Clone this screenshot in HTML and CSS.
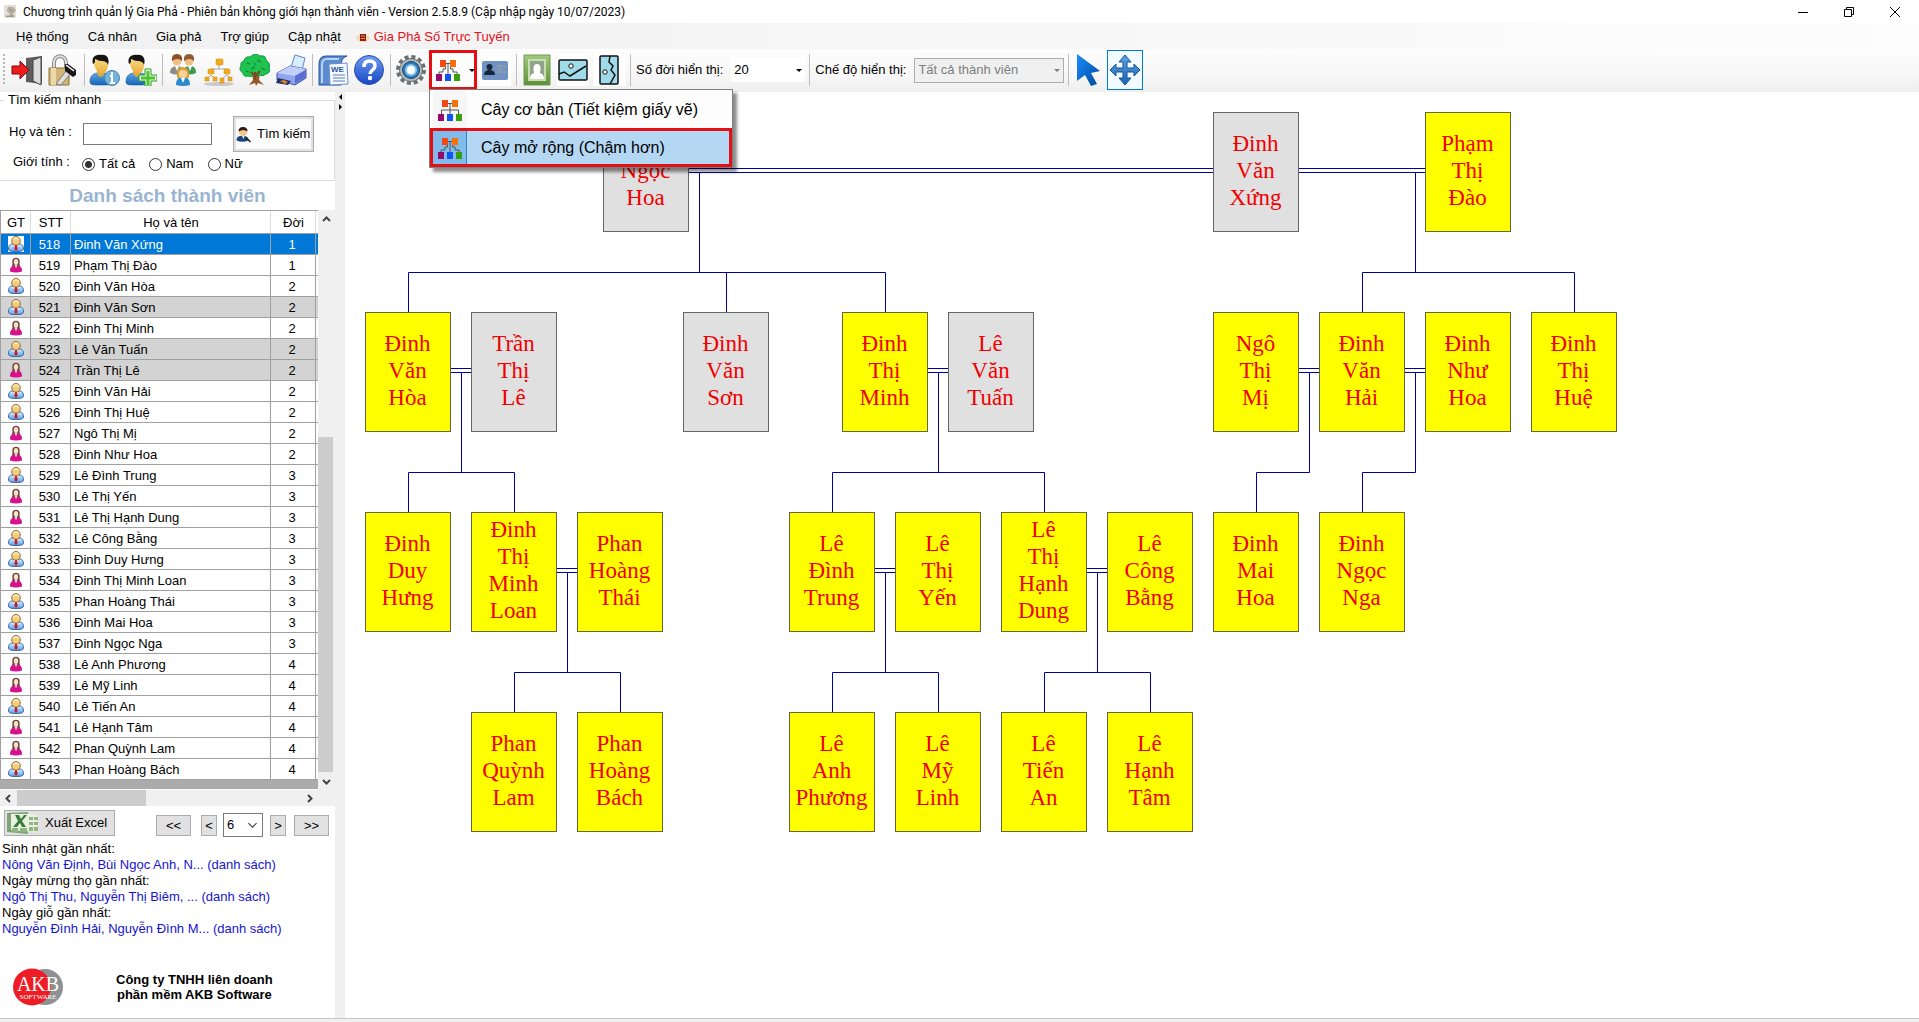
FILE: index.html
```html
<!DOCTYPE html>
<html lang="vi">
<head>
<meta charset="utf-8">
<title>Chương trình quản lý Gia Phả</title>
<link rel="stylesheet" href="styles.css">
</head>
<body>
<svg class="sprite" aria-hidden="true">
  <defs>
    <linearGradient id="gBlue" x1="0" y1="0" x2="0" y2="1"><stop offset="0" stop-color="#5aa6e6"/><stop offset="1" stop-color="#1766b4"/></linearGradient>
    <linearGradient id="gSkin" x1="0" y1="0" x2="0" y2="1"><stop offset="0" stop-color="#fbdc86"/><stop offset="1" stop-color="#e8ae3c"/></linearGradient>
    <linearGradient id="gHelp" x1="0" y1="0" x2="0" y2="1"><stop offset="0" stop-color="#6f9df0"/><stop offset="1" stop-color="#1746c4"/></linearGradient>
    <linearGradient id="gGreen" x1="0" y1="0" x2="0" y2="1"><stop offset="0" stop-color="#a4c97e"/><stop offset="1" stop-color="#5f8f3d"/></linearGradient>
    <linearGradient id="gPointer" x1="0" y1="0" x2="1" y2="1"><stop offset="0" stop-color="#1a8cff"/><stop offset="1" stop-color="#004a9c"/></linearGradient>
    <linearGradient id="gShirt" x1="0" y1="0" x2="0" y2="1"><stop offset="0" stop-color="#dcefff"/><stop offset="1" stop-color="#5b9be6"/></linearGradient>
  </defs>
  <symbol id="man" viewBox="0 0 16 16">
    <path d="M.5 13c0-4 2-5 4-5h7c2 0 4 1 4 5 0 2-3 2.500-7.500 2.500S.5 15 .5 13z" fill="url(#gShirt)" stroke="#2d62a8"/>
    <path d="M5.500 8h5L8 14z" fill="#fff"/><path d="M7 9h2l.7 4L8 15l-1.700-2z" fill="#c21f2a"/>
    <circle cx="8" cy="4.800" r="4.300" fill="#f3cd7e" stroke="#94692a"/>
    <path d="M5 3.500q3-3 6 0" fill="none" stroke="#fff0c0" stroke-width="1.500"/>
  </symbol>
  <symbol id="woman" viewBox="0 0 16 16">
    <path d="M4 9C5 8 4 5 4.500 3 5.500 0 10.500 0 11.500 3c.5 2-.5 4 .5 6z" fill="#6b4434"/>
    <path d="M2 14.500c0-3.500 1-5.500 4-5.500h4c3 0 4 2 4 5.500q-6 2-12 0z" fill="#d6108f"/>
    <path d="M6.500 8h3L8 11.500z" fill="#f8d5bd"/><ellipse cx="8" cy="5" rx="2.200" ry="3" fill="#fbdfcf"/>
  </symbol>
  <symbol id="tree-ext" viewBox="0 0 26 24">
    <path d="M8 5.500h10M10.500 5v6M15.500 5v6M10.500 11H8v3H4v3M15.500 11H18v3h4v3M13 5v12" fill="none" stroke="#555"/>
    <path d="M5 2h6v7H5z" fill="#f4490f"/><path d="M15 2h6v7h-6z" fill="#f8700a"/>
    <path d="M1 16h6v7H1z" fill="#930a6b"/><path d="M10 16h6v7h-6z" fill="#0f55f2"/><path d="M19 16h6v7h-6z" fill="#37a10b"/>
  </symbol>
  <symbol id="tree-basic" viewBox="0 0 26 24">
    <path d="M8 5.500h10M13 5v11M4.500 16v-4h17v4" fill="none" stroke="#555"/>
    <path d="M5 2h6v7H5z" fill="#f4490f"/><path d="M15 2h6v7h-6z" fill="#f8700a"/>
    <path d="M1 16h6v7H1z" fill="#930a6b"/><path d="M10 16h6v7h-6z" fill="#0f55f2"/><path d="M19 16h6v7h-6z" fill="#37a10b"/>
  </symbol>
  <symbol id="user" viewBox="0 0 32 32">
    <path d="M1 28c0-7 4-9 9-9h4c6 0 9 3 9 8 0 4-3 4-11 4S1 31 1 28z" fill="url(#gBlue)" stroke="#16599c" stroke-width=".6"/>
    <path d="M8 17h8l-2 5-3 1-3-3z" fill="#e3a83a"/>
    <path d="M5 9C5 4 8 3 12 3s7 3 7 8c0 5-3 9-6 9S5 15 5 9z" fill="url(#gSkin)"/>
    <path d="M4 10C2 4 6 0 12 1c6-1 9 4 7 10-1-3-3-4-6-4C9 7 7 5 6 5c0 3 0 4-2 5z" fill="#151515"/>
  </symbol>
</svg>

<header class="titlebar">
  <svg class="app-icon" viewBox="0 0 16 16"><path d="M1 1h13v14H1z" fill="#e4e0da"/><path d="M5 3h6l3 4-3 3v3H7v-3L4 8z" fill="#b9b0a4"/><path d="M3 13h9M7 5l3 3" stroke="#7b746b"/></svg>
  <h1 class="title">Chương trình quản lý Gia Phả - Phiên bản không giới hạn thành viên - Version 2.5.8.9 (Cập nhập ngày 10/07/2023)</h1>
  <div class="window-buttons">
    <button type="button" aria-label="Thu nhỏ"><svg viewBox="0 0 12 12"><path d="M1 6.500h10" /></svg></button>
    <button type="button" aria-label="Phục hồi"><svg viewBox="0 0 12 12"><path d="M1.500 3.500h7v7h-7zM3.500 3.500v-2h7v7h-2"/></svg></button>
    <button type="button" aria-label="Đóng"><svg viewBox="0 0 12 12"><path d="M1 1l10 10M11 1L1 11"/></svg></button>
  </div>
</header>

<nav class="menubar">
  <a href="#">Hệ thống</a><a href="#">Cá nhân</a><a href="#">Gia phả</a><a href="#">Trợ giúp</a><a href="#">Cập nhật</a>
  <a href="#" class="online"><svg viewBox="0 0 14 12"><ellipse cx="7" cy="7" rx="7" ry="4" fill="#f7d9b8"/><path d="M4 3h6v7H4z" fill="#8c1d18"/><path d="M5 5h4M5 7.500h4" stroke="#e8a13c"/></svg>Gia Phả Số Trực Tuyến</a>
</nav>

<div class="toolbar">
  <span class="grip"></span>
  <button type="button" class="tool" aria-label="Thoát"><svg viewBox="0 0 32 32"><path d="M15 4l16-2v28l-16-2z" fill="#5d5d5d"/><path d="M22 6l8-3v28l-8-4z" fill="#dcdcdc" stroke="#444"/><path d="M1 12h8V7l9 9-9 9v-5H1z" fill="#ee1c1c" stroke="#7d0b0b"/></svg></button>
  <button type="button" class="tool" aria-label="Khóa"><svg viewBox="0 0 32 32"><path d="M7 16V9c0-9 12-9 12 0v7" fill="none" stroke="#8a8a8a" stroke-width="4"/><path d="M7 16V9c0-9 12-9 12 0v7" fill="none" stroke="#dedede" stroke-width="2"/><path d="M2 14h20v17H2z" fill="#d2b577" stroke="#8b7136"/><path d="M4 14h5v17H4z" fill="#ead9ac"/><path d="M20 15l5 3-11 13-5-1 10-13z" fill="#ddd" stroke="#777"/><path d="M18 10l3 0 8 6 0 5-3 2-8-6z" fill="#181818"/><path d="M19 11l8 6" stroke="#fff" stroke-width="1.500"/></svg></button>
  <span class="sep"></span>
  <button type="button" class="tool" aria-label="Thông tin cá nhân"><svg viewBox="0 0 32 32"><use href="#user"/><circle cx="23" cy="24" r="7.500" fill="#76b3da" stroke="#4384b2"/><path d="M23 18v3M21 22h2v7M21 29h5" stroke="#fff" stroke-width="2" fill="none"/></svg></button>
  <button type="button" class="tool" aria-label="Thêm cá nhân"><svg viewBox="0 0 32 32"><use href="#user"/><path d="M20 15h6v6h6v6h-6v5h-6v-5h-6v-6h6z" fill="#e8fbdc" stroke="#2d9a20"/><path d="M23 17v14M16 24h14" stroke="#4dc230" stroke-width="3"/></svg></button>
  <span class="sep"></span>
  <button type="button" class="tool" aria-label="Gia đình"><svg viewBox="0 0 32 32"><path d="M3 19c0-5 3-7 7-7s6 2 6 7q-6 3-13 0z" fill="#8b8b8b"/><circle cx="10" cy="7" r="4.500" fill="#eec086"/><path d="M5 7q-1-7 5-7t5 7q-4-4-10 0z" fill="#8a5129"/><path d="M16 19c0-5 3-7 7-7s6 2 6 7q-7 3-13 0z" fill="#3f9a4f"/><path d="M8 12h4l-2 5zM21 12h4l-2 5z" fill="#fff"/><circle cx="22" cy="7" r="4.500" fill="#eec086"/><path d="M17 7q-1-7 5-7t5 7q-4-4-10 0z" fill="#925c33"/><path d="M9 31c0-6 3-8 7-8s7 2 7 8q-7 2-14 0z" fill="#2b8acc"/><path d="M10 24q-1-11 6-11t6 11z" fill="#d9a530"/><circle cx="16" cy="20" r="4" fill="#f6d2a0"/><path d="M14 24h4l-2 5z" fill="#fff"/></svg></button>
  <button type="button" class="tool" aria-label="Sơ đồ tổ chức"><svg viewBox="0 0 32 32"><ellipse cx="16" cy="30" rx="15" ry="2" fill="#c9c9c9"/><path d="M16 10v5M8 18v-3h16v3M8 21l-4 4M8 21l4 4M24 21l-5 4M24 21l4 4" fill="none" stroke="#a9a9a9"/><g fill="#f2ab1c" stroke="#c98711" stroke-width=".5"><rect x="13" y="5" width="7" height="6" rx="1"/><rect x="5" y="15" width="6" height="5" rx="1"/><rect x="21" y="15" width="6" height="5" rx="1"/><rect x="2" y="23" width="4" height="4"/><rect x="10" y="23" width="4" height="4"/><rect x="17" y="24" width="4" height="5"/><rect x="25" y="23" width="4" height="4"/></g></svg></button>
  <button type="button" class="tool" aria-label="Cây gia phả"><svg viewBox="0 0 32 32"><path d="M13 19l1 7-4 5 6-2 1 3 2-3 6 2-5-5 1-7z" fill="#96582e"/><path d="M5 7q1-5 6-4 5-5 10-1 6-1 6 4 5 4 3 8 2 5-3 6-3 3-7 1-2 2-4-1-3 4-7 2-5 1-5-3-5-3-2-7-1-4 3-5z" fill="#1fc352" stroke="#0f9c3a"/><path d="M8 9l3 1M18 6l4 2M12 15l4-2M22 14l4 2M7 17l3 1M15 9l2 2" stroke="#0f9238" stroke-width="1.500"/><path d="M16 18v8M16 22l-4-4M16 22l5-5" stroke="#7d4824" stroke-width="2"/></svg></button>
  <button type="button" class="tool" aria-label="In"><svg viewBox="0 0 32 32"><path d="M16 13L20 1l10 3-3 12z" fill="#d8edff" stroke="#5b86cc"/><path d="M2 19l13-7 16 3v9l-11 7-18-5z" fill="#8fa6ee" stroke="#4257b4"/><path d="M2 19l13-7 16 3-11 7z" fill="#c3cffb"/><path d="M20 22l11-6v7l-11 7z" fill="#5c6fd0"/><path d="M3 24l13 3-3 4-12-2z" fill="#2b2f66"/><path d="M5 27l4-1 4 2-3 2z" fill="#d98428"/></svg></button>
  <span class="sep"></span>
  <button type="button" class="tool" aria-label="Xuất Word"><svg viewBox="0 0 32 32"><path d="M2 31V10q0-8 7-8h21q-6 2-6 9v20z" fill="#5b8cd0" stroke="#28509c"/><path d="M5 29V11q0-6 5-6h12" fill="none" stroke="#b8d2f3" stroke-width="2"/><path d="M12 10l18-1 1 21-18 1z" fill="#f5f8fd" stroke="#6a8cc6"/><text x="14" y="18" class="word-mark">WE</text><path d="M16 21h12M16 24h12M16 27h12" stroke="#5d7fbd"/></svg></button>
  <button type="button" class="tool" aria-label="Trợ giúp"><svg viewBox="0 0 32 32"><circle cx="16" cy="16" r="14.500" fill="url(#gHelp)" stroke="#2a4fae"/><path d="M11 13q0-6 5.500-6t5.500 5c0 4-5 4-5 8" fill="none" stroke="#fff" stroke-width="3.500"/><circle cx="17" cy="24" r="2.200" fill="#fff"/></svg></button>
  <span class="sep"></span>
  <button type="button" class="tool" aria-label="Cấu hình"><svg viewBox="0 0 32 32"><circle cx="16" cy="16" r="13" fill="none" stroke="#6b7075" stroke-width="4" stroke-dasharray="4 2.800"/><circle cx="16" cy="16" r="11.500" fill="#b4b9bd" stroke="#666b70"/><circle cx="16" cy="16" r="8.500" fill="#2f7cb8" stroke="#17476f"/><circle cx="16" cy="16" r="6" fill="#8cc8ec"/><circle cx="16" cy="16" r="4" fill="#fff"/></svg></button>
  <div class="split">
    <button type="button" class="split-button" aria-label="Vẽ cây"><svg viewBox="0 0 26 24"><use href="#tree-ext"/></svg><span class="caret"></span></button>
    <div class="dropdown">
      <button type="button" class="option"><span class="option-icon"><svg viewBox="0 0 26 24"><use href="#tree-basic"/></svg></span>Cây cơ bản (Tiết kiệm giấy vẽ)</button>
      <button type="button" class="option active"><span class="option-icon"><svg viewBox="0 0 26 24"><use href="#tree-ext"/></svg></span>Cây mở rộng (Chậm hơn)</button>
    </div>
  </div>
  <button type="button" class="tool" aria-label="Thẻ cá nhân"><svg viewBox="0 0 32 32"><path d="M0 0h32v32H0z" fill="#fff"/><rect x="3" y="7" width="26" height="19" rx="2" fill="#7093c4"/><path d="M5 21q0-4 4-5h3q4 1 4 5z" fill="#17263b"/><circle cx="10.500" cy="13" r="3" fill="#17263b"/><path d="M18 12h9M18 15h6M18 18h9" stroke="#a6a58f"/></svg></button>
  <span class="sep"></span>
  <button type="button" class="tool" aria-label="Khung ảnh"><svg viewBox="0 0 32 32"><path d="M3 1h26v30H3z" fill="url(#gGreen)" stroke="#6f9a4a"/><path d="M7 5h18v22H7z" fill="#c8dfb0"/><path d="M9 7h14v18H9z" fill="#8fa48a"/><path d="M9 25q0-5 4-6-2-9 3-9t3 9q4 1 4 6z" fill="#fff"/></svg></button>
  <button type="button" class="tool" aria-label="Khổ ngang"><svg viewBox="0 0 32 32"><path d="M0 0h32v32H0z" fill="#fff"/><rect x="2" y="6" width="28" height="20" rx="1" fill="#9fdbe8" stroke="#111" stroke-width="1.500"/><path d="M2 20l5-2 6 4 16-10" fill="none" stroke="#111" stroke-width="1.500"/><circle cx="14" cy="12" r="2.200" fill="#fff" stroke="#111"/></svg></button>
  <button type="button" class="tool" aria-label="Khổ dọc"><svg viewBox="0 0 32 32"><path d="M0 0h32v32H0z" fill="#fff"/><rect x="7" y="2" width="18" height="28" rx="1" fill="#9fdbe8" stroke="#111" stroke-width="1.500"/><path d="M17 2l-1 6 4 4-2 4 4 5-5 9" fill="none" stroke="#111" stroke-width="1.500"/><circle cx="12" cy="18" r="2.200" fill="#fff" stroke="#111"/></svg></button>
  <span class="sep"></span>
  <label class="tool-label" for="generations">Số đời hiển thị:</label>
  <span class="picker picker-flat"><select id="generations"><option>20</option></select><span class="caret"></span></span>
  <span class="sep"></span>
  <label class="tool-label" for="mode">Chế độ hiển thị:</label>
  <span class="picker picker-off"><select id="mode" disabled><option>Tất cả thành viên</option></select><span class="caret"></span></span>
  <span class="sep"></span>
  <button type="button" class="tool" aria-label="Chọn"><svg viewBox="0 0 32 32"><path d="M4 0l23 17-9 2 6 11-6 2-6-11-8 6z" fill="url(#gPointer)"/></svg></button>
  <button type="button" class="tool pressed" aria-label="Di chuyển"><svg viewBox="0 0 32 32"><path d="M16 1l6 7h-4v6h7v-4l6 6-6 6v-4h-7v6h4l-6 7-6-7h4v-6H7v4l-6-6 6-6v4h7V8h-4z" fill="url(#gBlue)" stroke="#1c4f94"/></svg></button>
</div>

<main class="workspace">
  <aside class="sidebar">
    <fieldset class="search">
      <legend>Tìm kiếm nhanh</legend>
      <div class="search-row">
        <label for="name" class="name-label">Họ và tên :</label><input type="text" id="name" class="name-input">
        <button type="button" class="search-button"><svg viewBox="0 0 32 32"><path d="M1 28c0-7 4-9 9-9h6c6 0 9 3 9 9q-12 5-24 0z" fill="#14477e"/><circle cx="14" cy="11" r="8" fill="#f2c58b"/><path d="M5 10q0-9 9-9t9 9q-8-6-18 0z" fill="#2a1a12"/><path d="M12 19h5l-2 6z" fill="#fff"/><path d="M20 22l9 9" stroke="#222" stroke-width="3"/></svg>Tìm kiếm</button>
      </div>
      <div class="gender-row" role="radiogroup" aria-label="Giới tính">
        <span class="gender-label">Giới tính :</span>
        <label><input type="radio" name="gender" checked>Tất cả</label>
        <label><input type="radio" name="gender">Nam</label>
        <label><input type="radio" name="gender">Nữ</label>
      </div>
    </fieldset>
    <h2 class="list-title">Danh sách thành viên</h2>
    <div class="grid-frame">
      <div class="grid-body">
        <table class="members">
          <colgroup><col class="c-sex"><col class="c-no"><col class="c-name"><col class="c-gen"><col class="c-rest"></colgroup>
          <thead><tr><th>GT</th><th>STT</th><th>Họ và tên</th><th>Đời</th><th></th></tr></thead>
          <tbody>
            <tr class="selected"><td><svg><use href="#man"/></svg></td><td>518</td><td>Đinh Văn Xứng</td><td>1</td><td></td></tr>
            <tr><td><svg><use href="#woman"/></svg></td><td>519</td><td>Phạm Thị Đào</td><td>1</td><td></td></tr>
            <tr><td><svg><use href="#man"/></svg></td><td>520</td><td>Đinh Văn Hòa</td><td>2</td><td></td></tr>
            <tr class="gone"><td><svg><use href="#man"/></svg></td><td>521</td><td>Đinh Văn Sơn</td><td>2</td><td></td></tr>
            <tr><td><svg><use href="#woman"/></svg></td><td>522</td><td>Đinh Thị Minh</td><td>2</td><td></td></tr>
            <tr class="gone"><td><svg><use href="#man"/></svg></td><td>523</td><td>Lê Văn Tuấn</td><td>2</td><td></td></tr>
            <tr class="gone"><td><svg><use href="#woman"/></svg></td><td>524</td><td>Trần Thị Lê</td><td>2</td><td></td></tr>
            <tr><td><svg><use href="#man"/></svg></td><td>525</td><td>Đinh Văn Hải</td><td>2</td><td></td></tr>
            <tr><td><svg><use href="#man"/></svg></td><td>526</td><td>Đinh Thị Huệ</td><td>2</td><td></td></tr>
            <tr><td><svg><use href="#woman"/></svg></td><td>527</td><td>Ngô Thị Mị</td><td>2</td><td></td></tr>
            <tr><td><svg><use href="#woman"/></svg></td><td>528</td><td>Đinh Như Hoa</td><td>2</td><td></td></tr>
            <tr><td><svg><use href="#man"/></svg></td><td>529</td><td>Lê Đình Trung</td><td>3</td><td></td></tr>
            <tr><td><svg><use href="#woman"/></svg></td><td>530</td><td>Lê Thị Yến</td><td>3</td><td></td></tr>
            <tr><td><svg><use href="#woman"/></svg></td><td>531</td><td>Lê Thị Hạnh Dung</td><td>3</td><td></td></tr>
            <tr><td><svg><use href="#man"/></svg></td><td>532</td><td>Lê Công Bằng</td><td>3</td><td></td></tr>
            <tr><td><svg><use href="#man"/></svg></td><td>533</td><td>Đinh Duy Hưng</td><td>3</td><td></td></tr>
            <tr><td><svg><use href="#woman"/></svg></td><td>534</td><td>Đinh Thị Minh Loan</td><td>3</td><td></td></tr>
            <tr><td><svg><use href="#man"/></svg></td><td>535</td><td>Phan Hoàng Thái</td><td>3</td><td></td></tr>
            <tr><td><svg><use href="#man"/></svg></td><td>536</td><td>Đinh Mai Hoa</td><td>3</td><td></td></tr>
            <tr><td><svg><use href="#man"/></svg></td><td>537</td><td>Đinh Ngọc Nga</td><td>3</td><td></td></tr>
            <tr><td><svg><use href="#woman"/></svg></td><td>538</td><td>Lê Anh Phương</td><td>4</td><td></td></tr>
            <tr><td><svg><use href="#woman"/></svg></td><td>539</td><td>Lê Mỹ Linh</td><td>4</td><td></td></tr>
            <tr><td><svg><use href="#man"/></svg></td><td>540</td><td>Lê Tiến An</td><td>4</td><td></td></tr>
            <tr><td><svg><use href="#woman"/></svg></td><td>541</td><td>Lê Hạnh Tâm</td><td>4</td><td></td></tr>
            <tr><td><svg><use href="#woman"/></svg></td><td>542</td><td>Phan Quỳnh Lam</td><td>4</td><td></td></tr>
            <tr><td><svg><use href="#man"/></svg></td><td>543</td><td>Phan Hoàng Bách</td><td>4</td><td></td></tr>
          </tbody>
        </table>
      </div>
      <div class="vscroll"><svg viewBox="0 0 9 6"><path d="M1 5l3.500-3.500L8 5"/></svg><div class="vtrack"><span class="vthumb"></span></div><svg viewBox="0 0 9 6"><path d="M1 1l3.500 3.500L8 1"/></svg></div>
      <div class="hscroll"><svg viewBox="0 0 6 9"><path d="M5 1L1.500 4.500 5 8"/></svg><div class="htrack"><span class="hthumb"></span></div><svg viewBox="0 0 6 9"><path d="M1 1l3.500 3.500L1 8"/></svg></div>
    </div>
    <div class="pager">
      <button type="button" class="excel"><svg viewBox="0 0 32 22"><path d="M0 1l21-1v22L0 20z" fill="#7fa67a"/><path d="M2 2l28 0v18L2 18z" fill="#e8f0e0"/><path d="M3 1v18" stroke="#5f8c57" stroke-width="1.500"/><path d="M8 3h4l2 4 3-4h3l-5 6 4 6h-4l-2-4-3 4H6l5-6z" fill="#3a7d3a"/><path d="M22 5h4v3h-4zM27 5h4v3h-4zM22 10h4v3h-4zM27 10h4v3h-4zM22 15h4v4h-4zM27 15h4v4h-4zM13 16h7v4h-7zM5 16h6v4H5z" fill="#8fb67f"/></svg>Xuất Excel</button>
      <button type="button" class="page wide">&lt;&lt;</button>
      <button type="button" class="page">&lt;</button>
      <span class="picker picker-page"><select aria-label="Trang"><option>6</option></select><svg viewBox="0 0 9 6"><path d="M1 1l3.500 3.500L8 1"/></svg></span>
      <button type="button" class="page">&gt;</button>
      <button type="button" class="page wide">&gt;&gt;</button>
    </div>
    <dl class="events">
      <dt>Sinh nhật gần nhất:</dt><dd><a href="#">Nông Văn Định, Bùi Ngọc Anh, N... (danh sách)</a></dd>
      <dt>Ngày mừng thọ gần nhất:</dt><dd><a href="#">Ngô Thị Thu, Nguyễn Thị Biêm, ... (danh sách)</a></dd>
      <dt>Ngày giỗ gần nhất:</dt><dd><a href="#">Nguyễn Đình Hải, Nguyễn Đình M... (danh sách)</a></dd>
    </dl>
    <footer class="company">
      <svg class="logo" viewBox="0 0 50 38"><ellipse cx="32" cy="19" rx="18" ry="18" fill="#8f9093"/><ellipse cx="19" cy="19" rx="19" ry="18.500" fill="#ee1c24"/><text x="25" y="23" class="logo-big">AKB</text><text x="25" y="31" class="logo-small">SOFTWARE</text></svg>
      <p>Công ty TNHH liên doanh<br>phần mềm AKB Software</p>
    </footer>
  </aside>
  <div class="splitter"><span class="to-left"></span><span class="to-right"></span></div>
  <section class="canvas" aria-label="Cây gia phả">
    <svg class="links" viewBox="345 92 1300 760">
      <path d="M689 168.500h524M689 172.500h524M1299 168.500h126M1299 172.500h126
        M699.500 172v100M408.500 312v-39.500h477V312M726.500 272v40
        M1415.500 172v100M1362.500 312v-39.500h212V312
        M451 368.500h20M451 372.500h20M461.500 372v100M408.500 512v-39.500h106V512
        M928 368.500h20M928 372.500h20M938.500 372v100M832.500 512v-39.500h212V512
        M1299 368.500h20M1299 372.500h20M1309.500 372v100.500h-53V512
        M1405 368.500h20M1405 372.500h20M1415.500 372v100.500h-53V512
        M557 568.500h20M557 572.500h20M567.500 572v100M514.500 712v-39.500h106V712
        M875 568.500h20M875 572.500h20M885.500 572v100M832.500 712v-39.500h106V712
        M1087 568.500h20M1087 572.500h20M1097.500 572v100M1044.500 712v-39.500h106V712"/>
    </svg>
    <div class="node g1 gone" style="left:258px">&nbsp;<br>Ngọc<br>Hoa</div>
    <div class="node g1 gone" style="left:868px">Đinh<br>Văn<br>Xứng</div>
    <div class="node g1" style="left:1080px">Phạm<br>Thị<br>Đào</div>
    <div class="node g2" style="left:20px">Đinh<br>Văn<br>Hòa</div>
    <div class="node g2 gone" style="left:126px">Trần<br>Thị<br>Lê</div>
    <div class="node g2 gone" style="left:338px">Đinh<br>Văn<br>Sơn</div>
    <div class="node g2" style="left:497px">Đinh<br>Thị<br>Minh</div>
    <div class="node g2 gone" style="left:603px">Lê<br>Văn<br>Tuấn</div>
    <div class="node g2" style="left:868px">Ngô<br>Thị<br>Mị</div>
    <div class="node g2" style="left:974px">Đinh<br>Văn<br>Hải</div>
    <div class="node g2" style="left:1080px">Đinh<br>Như<br>Hoa</div>
    <div class="node g2" style="left:1186px">Đinh<br>Thị<br>Huệ</div>
    <div class="node g3" style="left:20px">Đinh<br>Duy<br>Hưng</div>
    <div class="node g3" style="left:126px">Đinh<br>Thị<br>Minh<br>Loan</div>
    <div class="node g3" style="left:232px">Phan<br>Hoàng<br>Thái</div>
    <div class="node g3" style="left:444px">Lê<br>Đình<br>Trung</div>
    <div class="node g3" style="left:550px">Lê<br>Thị<br>Yến</div>
    <div class="node g3" style="left:656px">Lê<br>Thị<br>Hạnh<br>Dung</div>
    <div class="node g3" style="left:762px">Lê<br>Công<br>Bằng</div>
    <div class="node g3" style="left:868px">Đinh<br>Mai<br>Hoa</div>
    <div class="node g3" style="left:974px">Đinh<br>Ngọc<br>Nga</div>
    <div class="node g4" style="left:126px">Phan<br>Quỳnh<br>Lam</div>
    <div class="node g4" style="left:232px">Phan<br>Hoàng<br>Bách</div>
    <div class="node g4" style="left:444px">Lê<br>Anh<br>Phương</div>
    <div class="node g4" style="left:550px">Lê<br>Mỹ<br>Linh</div>
    <div class="node g4" style="left:656px">Lê<br>Tiến<br>An</div>
    <div class="node g4" style="left:762px">Lê<br>Hạnh<br>Tâm</div>
  </section>
</main>
<div class="statusbar"></div>
</body>
</html>
```
FILE: styles.css
```css
* { box-sizing: border-box; }
body {
  margin: 0;
  min-height: 100vh;
  display: flex;
  flex-direction: column;
  background: #fff;
  color: #000;
  font: 13px/16px "Liberation Sans", Arial, sans-serif;
}
button, input, select { font: inherit; color: inherit; margin: 0; }
button { padding: 0; border: 0; background: none; }
a { color: inherit; text-decoration: none; }
.sprite { position: absolute; width: 0; height: 0; }

/* Title bar */
.titlebar { display: flex; align-items: center; height: 23px; padding-left: 3px; }
.app-icon { width: 15px; height: 15px; margin-right: 5px; }
.title { margin: 0; flex: 1; font: 12px/16px Roboto, "Noto Sans", sans-serif; white-space: nowrap; }
.window-buttons { display: flex; }
.window-buttons button { width: 46px; height: 22px; padding-right: 2px; }
.window-buttons svg { width: 12px; height: 12px; display: block; margin: auto; fill: none; stroke: #000; }

/* Menu bar */
.menubar { display: flex; align-items: center; height: 26px; padding: 1px 0 0 16px; gap: 19px; background: linear-gradient(90deg, #f0f0f0, #fdfdfd); }
.menubar .online { display: flex; align-items: center; gap: 4px; margin-left: -4px; color: #e6101c; }
.online svg { width: 14px; height: 12px; }

/* Toolbar */
.toolbar { display: flex; align-items: center; height: 43px; padding-bottom: 1px; background: linear-gradient(#fdfdfd, #f7f7f7 60%, #efefef); }
.grip { width: 2px; height: 32px; margin: 0 4px 0 3px; background: repeating-linear-gradient(#b8b8b8 0 2px, transparent 2px 4px); }
.tool { width: 36px; height: 40px; flex: none; display: flex; align-items: center; justify-content: center; }
.tool svg { width: 32px; height: 32px; }
.pressed { border: 1px solid #0078d7; background: #f2fbff; }
.sep { width: 6px; height: 32px; flex: none; display: flex; justify-content: center; }
.sep::after { content: ""; width: 1px; background: #bdbdbd; }
.word-mark { font: bold 8px "Liberation Sans", sans-serif; fill: #2b56a5; }
.tool-label { margin: 0 8px 0 3px; white-space: nowrap; }
.caret { width: 0; height: 0; border: 3px solid transparent; border-top-color: #000; border-bottom: 0; }
.picker { display: flex; align-items: center; position: relative; }
.picker select { appearance: none; width: 100%; height: 100%; border: 0; border-radius: 0; background: none; padding: 0 3px; outline: 0; }
.picker .caret, .picker svg { position: absolute; right: 3px; pointer-events: none; }
.picker svg { width: 11px; height: 7px; fill: none; stroke: #444; right: 4px; }
.picker-flat { width: 74px; height: 24px; background: #fff; margin-right: 1px; }
.picker-off { width: 150px; height: 25px; border: 1px solid #adadad; background: #f0f0f0; margin-right: 1px; }
.picker-off select { color: #7d7d7d; opacity: 1; }
.picker-off .caret { border-top-color: #7d7d7d; }

.split { position: relative; width: 48px; height: 40px; flex: none; z-index: 2; }
.split-button { display: flex; align-items: center; justify-content: space-between; width: 48px; height: 40px; padding: 0 0 0 3px; border: 3px solid #e30f13; background: #fcfcfc; }
.split-button svg { width: 26px; height: 24px; }
.split-button .caret { margin-right: -1px; }
.dropdown { position: absolute; left: 0; top: 39px; width: 304px; padding-top: 1px; border: 1px solid #808080; background: #fdfdfd; box-shadow: 4px 4px 3px rgba(0, 0, 0, .45); }
.option { display: flex; align-items: center; gap: 12px; width: 100%; height: 37px; padding: 0 3px; font-size: 16px; white-space: nowrap; }
.option-icon { display: flex; align-items: center; justify-content: center; align-self: stretch; width: 34px; background: #f6f6f6; }
.option-icon svg { width: 26px; height: 24px; }
.option { gap: 14px; }
.option.active { height: 39px; padding: 0; border: 3px solid #e30f13; background: #b4d7f3; }
.active .option-icon { background: #80bbeb; border-right: 1px solid #2f86cf; }

/* Layout */
.workspace { flex: 1; display: grid; grid-template-columns: 335px 10px minmax(0, 1fr); }
.splitter { background: #f0f0f0; display: flex; flex-direction: column; align-items: center; gap: 4px; padding-top: 2px; }
.to-left, .to-right { border: 3px solid transparent; width: 0; height: 0; }
.to-left { border-right-color: #000; border-left: 0; }
.to-right { border-left-color: #000; border-right: 0; }
.statusbar { height: 4px; border-top: 1px solid #c8c8c8; background: #f0f0f0; }

/* Search */
.search { margin: 0; min-width: 0; height: 89px; padding: 0; border: 1px solid #dcdcdc; border-left: 0; }
.search legend { margin-left: 5px; padding: 0 3px; }
.search-row { display: flex; align-items: center; height: 36px; margin-top: 8px; padding-left: 9px; }
.name-label { width: 74px; margin-top: -4px; }
.name-input { width: 129px; height: 22px; border: 1px solid #7a7a7a; padding: 0 4px; }
.search-button { display: flex; align-items: center; gap: 5px; width: 81px; height: 36px; margin-left: 21px; padding-left: 2px; border: 1px solid #adadad; background: #fbfbfb; box-shadow: inset 0 0 0 2px #e1e1e1; white-space: nowrap; }
.search-button svg { width: 16px; height: 17px; flex: none; }
.gender-row { display: flex; align-items: center; height: 24px; padding-left: 13px; }
.gender-label { width: 62px; margin: 0 7px 4px 0; white-space: nowrap; }
.gender-row label { display: flex; align-items: center; gap: 4px; margin-right: 14px; }
.gender-row input { appearance: none; width: 13px; height: 13px; border: 1px solid #333; border-radius: 50%; background: #fff; }
.gender-row input:checked { background: radial-gradient(circle, #333 0 3px, #fff 4px); }
.list-title { margin: 0; height: 29px; text-align: center; font-size: 19px; line-height: 29px; color: #99b4d1; }

/* Member grid */
.grid-frame { display: grid; grid-template: 580px 16px / 318px 17px; background: #f0f0f0; }
.grid-body { background: #ababab; overflow: hidden; border-bottom: 1px solid #fff; }
.members { width: 318px; table-layout: fixed; border-spacing: 0; border-left: 1px solid #a0a0a0; background: #fff; }
.c-sex { width: 30px; } .c-no { width: 40px; } .c-name { width: 200px; } .c-gen { width: 45px; } .c-rest { width: 2px; }
.members th { height: 24px; padding: 1px 0 0; font-weight: normal; border: 1px solid #a0a0a0; border-width: 1px 0 1px 0; box-shadow: inset -1px 0 #dedede; }
.members td { height: 21px; padding: 1px 2px 0 0; text-align: center; border: 1px solid #a0a0a0; border-width: 0 1px 1px 0; white-space: nowrap; }
.members td:nth-child(1) { padding: 0; }
.members td:nth-child(3) { text-align: left; padding-left: 3px; }
.members th:last-child, .members td:last-child { padding: 0; border-right: 0; box-shadow: none; }
.members svg { display: block; width: 16px; height: 16px; margin: 0 auto; }
.members .selected td { background: #0078d7; color: #fff; }
.members .selected svg { background: #fff; }
.members .gone td { background: #d3d3d3; }
.vscroll { display: flex; flex-direction: column; align-items: center; padding: 6px 0 5px; }
.vtrack { flex: 1; align-self: stretch; display: flex; flex-direction: column; justify-content: flex-end; padding: 0 2px 7px 0; }
.vthumb { height: 335px; background: #cdcdcd; }
.hscroll { display: flex; align-items: center; padding: 0 5px; }
.htrack { flex: 1; align-self: stretch; display: flex; padding-left: 6px; }
.hthumb { width: 129px; background: #cdcdcd; }
.vscroll svg { width: 9px; height: 6px; fill: none; stroke: #444; stroke-width: 2; }
.hscroll svg { width: 6px; height: 9px; fill: none; stroke: #444; stroke-width: 2; }

/* Pager */
.pager { display: flex; align-items: flex-start; padding: 4px 0 0 4px; height: 35px; }
.excel { display: flex; align-items: center; gap: 6px; width: 111px; height: 26px; padding-left: 2px; margin-right: 41px; border: 1px solid #adadad; background: #e1e1e1; white-space: nowrap; }
.excel svg { width: 32px; height: 22px; flex: none; }
.page { width: 16px; height: 21px; margin-top: 5px; border: 1px solid #adadad; background: #e1e1e1; line-height: 16px; }
.page.wide { width: 35px; }
.page.wide:nth-child(2) { margin-right: 10px; }
.page.wide:last-child { margin-left: 8px; }
.picker-page { width: 40px; height: 24px; margin: 3px 7px 0 6px; border: 1px solid #7a7a7a; background: #fff; }

.events { margin: 0; padding: 0 0 0 2px; white-space: nowrap; }
.events dd { margin: 0; color: #1414d2; }
.company { display: flex; align-items: center; gap: 53px; padding: 31px 0 0 13px; }
.logo { width: 50px; height: 38px; }
.logo-big { font: 20px "Liberation Serif", serif; fill: #fff; text-anchor: middle; }
.logo-small { font: 7px "Liberation Serif", serif; fill: #fff; text-anchor: middle; }
.company p { margin: 0; text-align: center; font-weight: bold; line-height: 15px; }

/* Family tree */
.canvas { position: relative; overflow: hidden; background: #fff; }
.links { position: absolute; left: 0; top: 0; width: 1300px; height: 760px; fill: none; stroke: #00009c; }
.node { position: absolute; width: 86px; height: 120px; display: flex; flex-direction: column; justify-content: center; text-align: center; font: 23px/27px "Liberation Serif", "Times New Roman", serif; color: #f00000; background: #ff0; border: 1px solid #666633; padding: 0 1px 4px 0; }
.node.gone { background: #e0e0e0; border-color: #666; }
.g1 { top: 20px; } .g2 { top: 220px; } .g3 { top: 420px; } .g4 { top: 620px; }
```
